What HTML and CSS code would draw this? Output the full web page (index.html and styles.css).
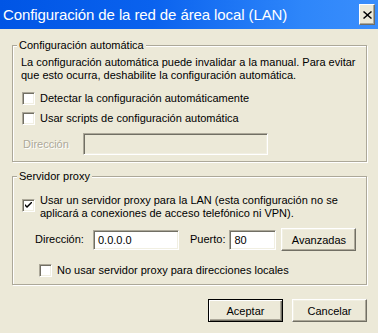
FILE: index.html
```html
<!DOCTYPE html>
<html lang="es">
<head>
  <meta charset="UTF-8" />
  <title>Configuración de la red de área local (LAN)</title>
  <link rel="stylesheet" href="styles.css">
</head>
<body>

<div class="dialog">
  <header class="titlebar">
    <span class="title">Configuración de la red de área local (LAN)</span>
    <span class="close-btn">
      <svg width="9" height="8" viewBox="0 0 9 8"><path d="M1 0 L4.5 3 L8 0 L9 1 L5.5 4 L9 7 L8 8 L4.5 5 L1 8 L0 7 L3.5 4 L0 1 Z" fill="#000"/></svg>
    </span>
  </header>

  <fieldset class="group group-auto">
    <legend>Configuración automática</legend>
    <p class="info">La configuración automática puede invalidar a la manual. Para evitar que esto ocurra, deshabilite la configuración automática.</p>
    <label class="check-row row-detect"><span class="checkbox"></span>Detectar la configuración automáticamente</label>
    <label class="check-row row-scripts"><span class="checkbox"></span>Usar scripts de configuración automática</label>
    <div class="field-row row-dir-auto">
      <span class="label disabled">Dirección</span>
      <span class="input input-disabled"></span>
    </div>
  </fieldset>

  <!-- Servidor proxy -->
  <fieldset class="group group-proxy">
    <legend>Servidor proxy</legend>
    <label class="check-row row-use-proxy">
      <span class="checkbox checked">
        <svg width="7" height="7" viewBox="0 0 7 7"><path d="M0 2 L2 4 L7 -1 L7 1 L2 6 L0 4 Z" fill="#000"/></svg>
      </span>
      <span>Usar un servidor proxy para la LAN (esta configuración no se aplicará a conexiones de acceso telefónico ni VPN).</span>
    </label>
    <div class="field-row row-proxy">
      <span class="label">Dirección:</span>
      <span class="input input-addr">0.0.0.0</span>
      <span class="label label-port">Puerto:</span>
      <span class="input input-port">80</span>
      <button class="btn btn-adv">Avanzadas</button>
    </div>
    <label class="check-row row-local"><span class="checkbox"></span>No usar servidor proxy para direcciones locales</label>
  </fieldset>

  <div class="actions">
    <button class="btn btn-default">Aceptar</button>
    <button class="btn">Cancelar</button>
  </div>
</div>

</body>
</html>
```

FILE: styles.css
```css
* {
  box-sizing: border-box;
}

body {
  margin: 0;
  width: 378px;
  height: 333px;
  overflow: hidden;
  background: #ECE9D8;
  font-family: 'Liberation Sans', Arial, sans-serif;
  font-size: 11px;
  line-height: 13px;
  color: #000;
}

.dialog {
  display: flex;
  flex-direction: column;
  height: 333px;
}

.titlebar {
  height: 29px;
  background: linear-gradient(to right, #0055E5, #0A62EE 40%, #2E86FA 80%, #3A8EFC);
  display: flex;
  align-items: center;
  justify-content: space-between;
  padding: 0 3px 1px 3px;
}

.title {
  color: #fff;
  font-size: 15px;
  letter-spacing: -0.1px;
}

.close-btn {
  width: 16px;
  height: 21px;
  margin-top: 1px;
  background: #ECE9D8;
  border-top: 1px solid #fff;
  border-left: 1px solid #fff;
  border-right: 1px solid #716F64;
  border-bottom: 1px solid #716F64;
  box-shadow: inset -1px -1px 0 #ACA899;
  display: flex;
  align-items: center;
  justify-content: center;
}

/* group boxes */
.group {
  margin: 0 11px 0 12px;
  padding: 0 6px 0 8px;
  border: 1px solid #ACA899;
  box-shadow: 1px 1px 0 #fff, inset 1px 1px 0 #fff;
  min-width: 0;
}

.group legend {
  padding: 0 2px;
  margin-left: -4px;
  background: #ECE9D8;
  line-height: 13px;
}

.group-auto {
  margin-top: 10px;
  padding-top: 4px;
  padding-bottom: 6px;
}

.group-proxy {
  margin-top: 8px;
  padding-top: 11px;
  padding-bottom: 7px;
}

.info {
  margin: 0;
  margin-right: -4px;
}

.check-row {
  display: flex;
  align-items: flex-start;
  gap: 5px;
}

.checkbox {
  flex: none;
  width: 13px;
  height: 13px;
  background: #fff;
  border-top: 1px solid #ACA899;
  border-left: 1px solid #ACA899;
  border-right: 1px solid #fff;
  border-bottom: 1px solid #fff;
  box-shadow: inset 1px 1px 0 #716F64, inset -1px -1px 0 #F1EFE2;
  display: flex;
  align-items: center;
  justify-content: center;
}

.row-detect {
  margin-top: 10px;
  margin-left: 1px;
}

.row-scripts {
  margin-top: 7px;
  margin-left: 1px;
}

.field-row {
  display: flex;
  align-items: center;
}

.row-dir-auto {
  margin-top: 8px;
  margin-left: 2px;
}

.label.disabled {
  color: #ACA899;
  text-shadow: 1px 1px 0 #fff;
  width: 60px;
}

.input {
  height: 20px;
  background: #fff;
  border-top: 1px solid #ACA899;
  border-left: 1px solid #ACA899;
  border-right: 1px solid #fff;
  border-bottom: 1px solid #fff;
  box-shadow: inset 1px 1px 0 #716F64, inset -1px -1px 0 #F1EFE2;
  padding: 3px 4px 0 4px;
}

.input-disabled {
  width: 185px;
  height: 22px;
  background: #ECE9D8;
}

.row-use-proxy {
  margin-left: 1px;
}

.row-use-proxy .checkbox {
  margin-top: 5px;
}

.row-proxy {
  margin-top: 8px;
  margin-left: 14px;
}

.row-proxy .label {
  width: 58px;
}

.input-addr {
  width: 86px;
}

.row-proxy .label-port {
  width: auto;
  margin-left: 11px;
  margin-right: 4px;
}

.input-port {
  width: 47px;
}

.btn {
  font-family: 'Liberation Sans', Arial, sans-serif;
  font-size: 11px;
  width: 75px;
  height: 23px;
  padding: 0;
  background: #ECE9D8;
  color: #000;
  border-top: 1px solid #fff;
  border-left: 1px solid #fff;
  border-right: 1px solid #716F64;
  border-bottom: 1px solid #716F64;
  box-shadow: inset -1px -1px 0 #ACA899, inset 1px 1px 0 #F1EFE2;
}

.btn-adv {
  margin-left: 5px;
}

.row-local {
  margin-top: 13px;
  margin-left: 18px;
}

.actions {
  display: flex;
  justify-content: flex-end;
  gap: 9px;
  margin-top: 14px;
  padding-right: 11px;
}

.btn-default {
  border: 1px solid #000;
  box-shadow: inset 1px 1px 0 #fff, inset -1px -1px 0 #716F64, inset -2px -2px 0 #ACA899;
}
```
